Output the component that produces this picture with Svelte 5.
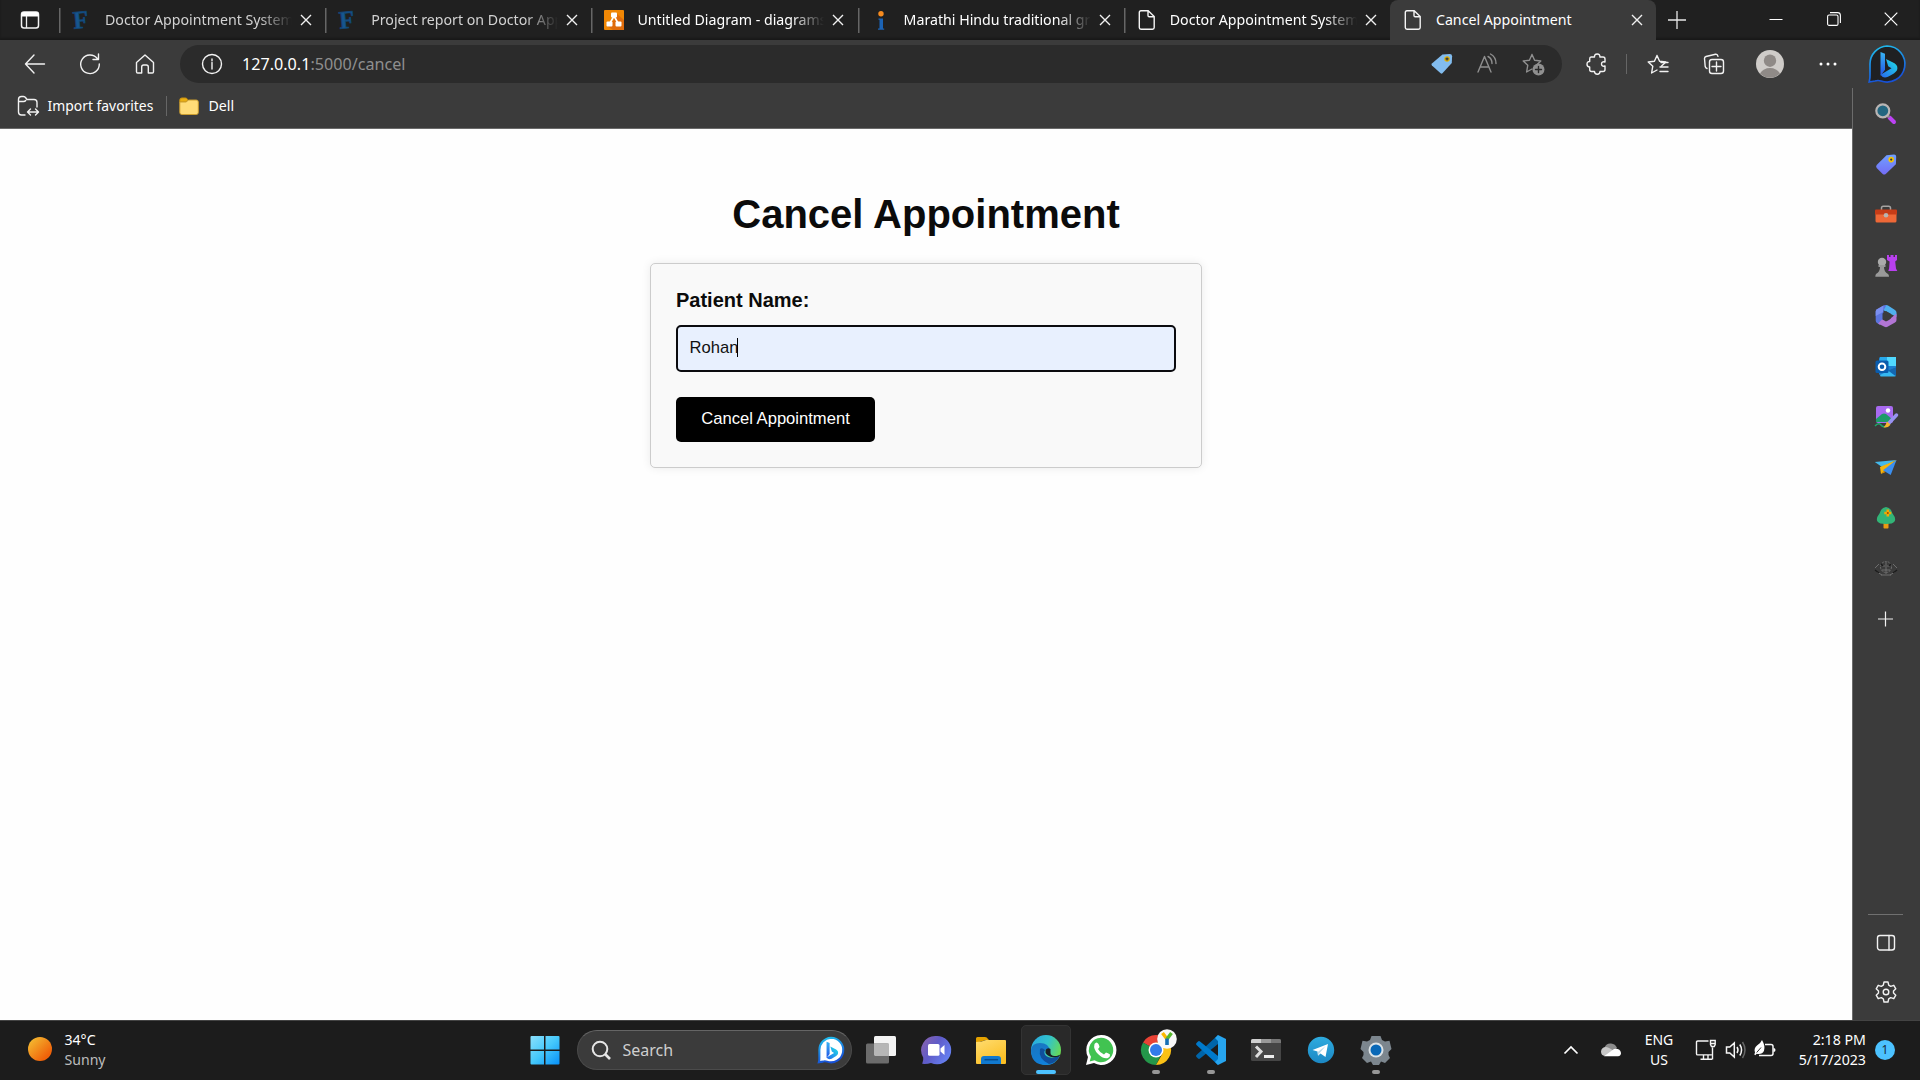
<script>
  const tabs = [
    { title: 'Doctor Appointment System', icon: 'f', dim: true },
    { title: 'Project report on Doctor Appointment', icon: 'f', dim: true },
    { title: 'Untitled Diagram - diagrams.net', icon: 'drawio' },
    { title: 'Marathi Hindu traditional greeting', icon: 'i' },
    { title: 'Doctor Appointment System', icon: 'page' },
    { title: 'Cancel Appointment', icon: 'page', active: true }
  ];
  const side = ['search', 'tag', 'toolbox', 'chess', 'm365', 'outlook', 'designer', 'plane', 'tree', 'emblem', 'plus'];
  const apps = ['taskview', 'chat', 'explorer', 'edge', 'whatsapp', 'chrome', 'vscode', 'terminal', 'telegram', 'settings'];
  const running = ['chrome', 'vscode', 'settings'];
</script>

{#snippet favicon(name)}
  {#if name === 'f'}
    <svg width="20" height="20" viewBox="0 0 20 20"><text x="1" y="18" class="f-letter" transform="rotate(-5 10 10)">F</text></svg>
  {:else if name === 'drawio'}
    <svg width="20" height="20" viewBox="0 0 20 20"><rect width="20" height="20" rx="1" fill="#f08705" /><path d="M12 3l8 7v10H9l-6-4 7-6z" fill="#df6c0c" /><path d="M10 6L5.500 14M10 6l4.500 8" stroke="#fff" stroke-width="1.600" /><rect x="7" y="2.500" width="6" height="5" rx="1" fill="#fff" /><rect x="2.500" y="11.500" width="6" height="5" rx="1" fill="#fff" /><rect x="11.500" y="11.500" width="6" height="5" rx="1" fill="#fff" /></svg>
  {:else if name === 'i'}
    <svg width="20" height="20" viewBox="0 0 20 20"><circle cx="10" cy="3.700" r="2.700" fill="#f68b1f" /><path d="M7.500 8.500H12v10h1.200v1.300H7v-1.300h1.500v-8.700h-1z" fill="#1b63b5" /></svg>
  {:else}
    <svg width="20" height="20" viewBox="0 0 20 20" fill="none" stroke="#f4f4f4" stroke-width="1.400"><path d="M4 .8h7.200L17.200 6.500V17.500q0 1.700-1.700 1.700H4q-1.700 0-1.700-1.700v-15Q2.300.8 4 .8zM11 1v4.500q0 1.200 1.200 1.200h5" /></svg>
  {/if}
{/snippet}

{#snippet bing(bg, size)}
  <svg width={size} height={size} viewBox="0 0 38 38"><path d="M19 1a18 18 0 1 1-6 35q-3-1-6 0l-5.800 1q1-4 .8-7V19A18 18 0 0 1 19 1z" fill={bg} stroke="url(#bing-ring)" stroke-width={size > 30 ? 1.7 : 3} /><path d="M12.500 7l4.500 1.800v16l-4.500 6z" fill="url(#bing-a)" /><path d="M18 14l8.500 4.300q4 2.500 2.500 7-1.800 3.200-9 6.500-5 2-7.500-2l11-6.500-3.300-2z" fill="url(#bing-b)" /></svg>
{/snippet}

{#snippet sideIcon(name)}
  <svg width="24" height="24" viewBox="0 0 24 24">
    {#if name === 'search'}
      <path d="M15.500 15.500L20 20" stroke="#bd42f4" stroke-width="4" stroke-linecap="round" /><path d="M13.500 13.500l2 2" stroke="#888" stroke-width="2" /><circle cx="8.800" cy="8.800" r="6.500" fill="#236680" stroke="#b9b5b4" stroke-width="2.200" />
    {:else if name === 'tag'}
      <path d="M12.500 2.200l7.500-.6q2.200 0 2.200 2.200l-.3 7.400-10.200 9.700q-1.500 1.200-3 0l-6-6q-1.200-1.500 0-3z" fill="url(#tag-g)" /><circle cx="17.200" cy="6.600" r="2.800" fill="#f4c400" /><circle cx="17.200" cy="6.600" r="1.100" fill="#27304f" />
    {:else if name === 'toolbox'}
      <path d="M7.500 7V5q0-1.800 1.800-1.800h5.400q1.800 0 1.800 1.800v2" fill="none" stroke="#a6a3a1" stroke-width="1.500" /><rect x="1.500" y="8" width="21" height="11.500" rx="1.500" fill="#ee6837" /><path d="M1 7.500q0-1 1-1h20q1 0 1 1v4H1z" fill="#c63c17" /><circle cx="12" cy="12.200" r="2.300" fill="#b8b4b1" />
    {:else if name === 'chess'}
      <path d="M13 1h2v2h1.500V1h3v2H21V1h2v5l-1.800 1.500.8 7 1.300 2.500h-9l.8-2.500.5-7L13 6z" fill="#b940ef" /><circle cx="8" cy="8" r="4.200" fill="#aaa" /><path d="M4.500 11h7v2h-1.500q0 5 4 7 1 .8 1 2.700H1.300Q1.300 21 2 20q4-2 4-7H4.500z" fill="#999" />
    {:else if name === 'm365'}
      <path d="M11 1.500q1.500-1 3 0L21 6q1.500 1 1.500 2.500V13L16 9.500 9 6z" fill="#4fb0ee" /><path d="M12.500 1L9.500 6.500v9L6 21l-3-2q-1.300-1-1.300-2.500v-9Q1.700 6 3 5.200L10 1.300z" fill="#5b74de" /><path d="M9.500 1.500L3 5.200Q1.700 6 1.700 7.500V12L9 8z" fill="#7b8ff0" /><path d="M8 15.500l6 1 8.500-7v6.500q0 1.500-1.500 2.500l-7.500 4.300q-1.500.8-3 0L4 19.500z" fill="#b275d4" /><path d="M12 7l4.700 2.700v5L12 17.500l-3.500-2v-6z" fill="#3b3b3b" />
    {:else if name === 'outlook'}
      <rect x="5" y="2" width="17" height="18" rx="1.500" fill="#1c7fd0" /><path d="M6 2h8v8H5z" fill="#28a8ea" /><path d="M13 2h9v9h-9z" fill="#50d9ff" /><path d="M6 20L22 12v8q0 1.500-1.500 1.500h-14z" fill="#35b8f1" /><path d="M22 12v8q0 .8-.5 1L14 15.500z" fill="#1466b0" /><rect x="1.500" y="5.500" width="13" height="12.500" rx="1.500" fill="#0a5cad" /><circle cx="8" cy="11.700" r="3.300" fill="none" stroke="#fff" stroke-width="2" />
    {:else if name === 'designer'}
      <rect x="2" y="1" width="17" height="17" rx="2" fill="#a86af0" /><path d="M2 14l6-5q2-1 4 0l6 5v3H2z" fill="#1e9c68" /><circle cx="14" cy="5.500" r="2.200" fill="#fff" /><path d="M1 21q4-4 6-1t6 1" stroke="#1fa66a" stroke-width="1.500" fill="none" /><path d="M22.500 10L15 18" stroke="#9793f0" stroke-width="3.500" stroke-linecap="round" /><path d="M13 16.500l3.500 3.200q-2.500 3.500-7 2.800 2.500-2.500 3.500-6z" fill="#f8b52c" />
    {:else if name === 'plane'}
      <path d="M.8 6L22.500 4 8 11z" fill="#43b9ec" /><path d="M22.500 4L6 11l1 7z" fill="#f6b50b" /><path d="M22.500 4l-5.800 15-7.700-4.700z" fill="#3b8ff0" /><path d="M7 18l3-3 1.500 1z" fill="#e89500" />
    {:else if name === 'tree'}
      <rect x="9.500" y="16" width="5" height="6.500" rx=".8" fill="#e89a12" /><path d="M12 1q5 .5 6.500 6.500 4 5 2 8-1.500 2.500-8.500 2.500t-8.500-2.500q-2-3 2-8Q7 1.500 12 1z" fill="#32b477" /><path d="M13.800 3.500v7M10.300 7h7" stroke="#f7a600" stroke-width="2.600" /><circle cx="13.800" cy="7" r="1" fill="#9a4f00" />
    {:else if name === 'emblem'}
      <g fill="none" stroke="#747474" stroke-width=".9"><circle cx="12" cy="10" r="5.500" stroke-dasharray="2 1" /><path d="M1 11l4-4M23 11l-4-4M3 15l5 3M21 15l-5 3M8 9h3M13 9h3M12 5v12M8 13h8M7 18h10" /><path d="M1 13l4 3M23 13l-4 3M7 7l2 2M17 7l-2 2" stroke="#1c1c1c" stroke-width="1.500" /></g>
    {:else}
      <path d="M11.500 4.500v15M4 12h15" stroke="#f2f2f2" stroke-width="1.200" />
    {/if}
  </svg>
{/snippet}

{#snippet appIcon(name)}
  <svg width="36" height="40" viewBox="0 0 36 40">
    {#if name === 'taskview'}
      <rect x="11" y="6" width="22" height="20" rx="1.500" fill="#f3f3f3" /><rect x="3" y="13.500" width="23" height="20" rx="1.500" fill="#6c6c6c" /><path d="M11 13.500h15v12.500H12l-1-1z" fill="#b6b6b6" />
    {:else if name === 'chat'}
      <path d="M18 6a14.200 14.200 0 1 1-5 27q-4 1.200-8.800.8 1.500-3.500 1-6.300A14.200 14.200 0 0 1 18 6z" fill="url(#chat-g)" /><rect x="10" y="14" width="11.500" height="11.800" rx="1.500" fill="#fff" /><path d="M22.500 18.500l4-3.500v10l-4-3.500z" fill="#fff" />
    {:else if name === 'explorer'}
      <path d="M3 8.500Q3 7 4.500 7H12q2 0 3 2l1 1h-3L3 13z" fill="#e5a200" /><path d="M3 12q6 0 10-2h19q1 0 1 1v22q0 1-1 1H4q-1 0-1-1z" fill="url(#folder-g)" /><path d="M8 34v-5q0-3 3-3h14q3 0 3 3v5z" fill="#1179cf" /><path d="M11.500 29.700H25" stroke="#084c8e" stroke-width="1.500" />
    {:else if name === 'edge'}
      <circle cx="18" cy="20" r="15" fill="url(#edge-a)" /><path d="M3 20q1-7 9-7 9 0 10 8-2-3-5-1-2 3 1 6 5 5 14-1Q28 35 18 35 3 35 3 20z" fill="url(#edge-b)" /><path d="M12 19q-2 10 9 15 8-1 11-9-8 5-14 1-3-3-1-6-3-3-5-1z" fill="#104f9c" /><path d="M17.500 20q2-3 5-1v4q0 2.500 4 3 4.500 0 6-2-1 3-4 3-8 1-11-4z" fill="#1c1f22" />
    {:else if name === 'whatsapp'}
      <path d="M18 5A15 15 0 1 1 11 33l-8 2 2-8A15 15 0 0 1 18 5z" fill="#fff" /><path d="M18 7.800a12.200 12.200 0 1 1-6.500 22.500L6.700 31.500 8 26.800A12.200 12.200 0 0 1 18 7.800z" fill="#41c351" /><path d="M11.500 14q2-3 4 0l1 2.500q0 1-1.500 2.500 2 4 6 5.500l2-2q2 .3 4 2 .5 2-2 3.500-5 1.200-10-4-5-5-3.500-10z" fill="#fff" />
    {:else if name === 'chrome'}
      <path d="M18 20L5 12.500A15 15 0 0 1 31 12.500H18z" fill="#e94235" /><path d="M5 12.500A15 15 0 0 0 18 35l6-12z" fill="#24974a" /><path d="M18 35A15 15 0 0 0 31 12.500H18l6.500 11z" fill="#fbc116" /><circle cx="18" cy="20" r="7.500" fill="#fff" /><circle cx="18" cy="20" r="6" fill="#327bea" /><circle cx="29" cy="9" r="9.800" fill="#f8f8f8" /><path d="M24.500 3l4.500 6" stroke="#fdb900" stroke-width="3.500" /><path d="M33.500 3l-4.500 6" stroke="#57b82d" stroke-width="3.500" /><path d="M29 8.500V15" stroke="#146eb4" stroke-width="3.600" />
    {:else if name === 'vscode'}
      <path d="M25 5v9L7 28.500q-1 .8-2 0L3.500 27q-1-1 0-2z" fill="#0065a9" /><path d="M3.500 15q-1-1 0-2L5 11.500q1-.8 2 0L25 26v9z" fill="#007acc" /><path d="M25 5l8 4v22l-8 4-3-3 3-3V11l-3-3z" fill="#27a5ef" />
    {:else if name === 'terminal'}
      <rect x="3" y="9" width="30" height="22" rx="1.500" fill="#454545" /><path d="M3 13v-2.500Q3 9 4.500 9H13v4z" fill="#d0d0d0" /><path d="M13 9h10v4H13z" fill="#999" /><path d="M23 9h8.500Q33 9 33 10.500V13H23z" fill="#777" /><path d="M8 16.500l5 5-5 5.500" fill="none" stroke="#ddd" stroke-width="3" /><path d="M16 26.500h10" stroke="#ececec" stroke-width="3" />
    {:else if name === 'telegram'}
      <circle cx="18" cy="20" r="13.200" fill="url(#tg)" /><path d="M9.500 20L25 14l-2.500 13-5-3.500-2.500 2.300-.5-4.300z" fill="#fff" /><path d="M14.700 22l8-6-6 7-1.700 2.500z" fill="#b9d9e9" />
    {:else}
      <path d="M13.500 6h9l1.500 4 3 1.500 4.500-.7 2 8.200-3 3v3l1.500 3-5 5-4-1.500-2 3.500h-6l-2-3.500L9 33l-5-5 1.500-3v-3l-3-3 2-8.200 4.500.7 3-1.500z" fill="#7c868e" /><circle cx="18" cy="20" r="7.500" fill="#dce3e7" /><circle cx="18" cy="20" r="5.500" fill="#0868b7" />
    {/if}
  </svg>
{/snippet}

{#snippet star()}
  <path d="M11 2.500l2.600 5.700 6.200.8-4.500 4.300M11 2.500L8.400 8.200l-6.200.8 4.600 4.200L5.600 20l5.400-3" />
{/snippet}

<svg class="defs" width="0" height="0">
  <defs>
    <linearGradient id="bing-ring" x1="0" y1="0" x2=".3" y2="1"><stop stop-color="#20c5ee" /><stop offset="1" stop-color="#1751d7" /></linearGradient>
    <linearGradient id="bing-a" x1="0" y1="0" x2="0" y2="1"><stop stop-color="#37b5f5" /><stop offset="1" stop-color="#2353e4" /></linearGradient>
    <linearGradient id="bing-b" x1="0" y1="1" x2="1" y2="0"><stop stop-color="#2866ef" /><stop offset="1" stop-color="#1ee2e5" /></linearGradient>
    <linearGradient id="tag-g" x1="0" y1="0" x2="0" y2="1"><stop stop-color="#6fa0ff" /><stop offset="1" stop-color="#746cf5" /></linearGradient>
    <linearGradient id="chat-g" x1="0" y1="0" x2="1" y2=".6"><stop stop-color="#8f63a9" /><stop offset=".5" stop-color="#5f5bc8" /><stop offset="1" stop-color="#657ff0" /></linearGradient>
    <linearGradient id="folder-g" x1="0" y1="0" x2=".6" y2="1"><stop stop-color="#ffdc70" /><stop offset="1" stop-color="#fbbf24" /></linearGradient>
    <linearGradient id="edge-a" x1="0" y1=".2" x2="1" y2=".6"><stop stop-color="#28a9df" /><stop offset=".5" stop-color="#32c3cc" /><stop offset="1" stop-color="#6bdb4d" /></linearGradient>
    <linearGradient id="edge-b" x1="0" y1="0" x2=".5" y2="1"><stop stop-color="#1a75bd" /><stop offset="1" stop-color="#1081dc" /></linearGradient>
    <linearGradient id="tg" x1="0" y1="0" x2="0" y2="1"><stop stop-color="#2eabdf" /><stop offset="1" stop-color="#1c88c4" /></linearGradient>
    <linearGradient id="win" x1="0" y1="0" x2="1" y2="1"><stop stop-color="#8be0fc" /><stop offset=".5" stop-color="#45c8fb" /><stop offset="1" stop-color="#0790f8" /></linearGradient>
  </defs>
</svg>

<div class="screen">
  <header class="tabstrip">
    <div class="tab-actions">
      <svg width="20" height="20" viewBox="0 0 20 20"><rect x="1.500" y="2" width="17" height="16" rx="2.500" fill="none" stroke="#f4f4f4" stroke-width="1.500" /><path d="M1.500 6.500V4.500Q1.500 2 4 2h12q2.500 0 2.500 2.500v2z" fill="#fff" /><path d="M6.500 6v12" stroke="#eee" stroke-width="1.300" /></svg>
    </div>
    {#each tabs as tab}
      <div class="tab" class:active={tab.active} class:dim={tab.dim}>
        {@render favicon(tab.icon)}
        <span class="title">{tab.title}</span>
        <svg width="12" height="12" viewBox="0 0 12 12"><path d="M1 1l10 10M11 1L1 11" stroke="#f1f1f1" stroke-width="1.400" /></svg>
      </div>
    {/each}
    <div class="new-tab"><svg width="18" height="18" viewBox="0 0 18 18"><path d="M9 0v18M0 9h18" stroke="#e8e8e8" stroke-width="1.300" /></svg></div>
    <div class="window-buttons">
      <svg width="14" height="14" viewBox="0 0 14 14"><path d="M.5 7.500h13" stroke="#fff" /></svg>
      <svg width="14" height="14" viewBox="0 0 14 14" fill="none" stroke="#fff" stroke-width="1.100"><rect x=".6" y="3" width="10.400" height="10.400" rx="1.500" /><path d="M3 .6h7.500q2.900 0 2.900 2.900V11" /></svg>
      <svg width="14" height="14" viewBox="0 0 14 14"><path d="M.7.7l12.600 12.600M13.300.7L.7 13.300" stroke="#fff" stroke-width="1.200" /></svg>
    </div>
  </header>

  <div class="toolbar">
    <div class="cell"><svg width="22" height="22" viewBox="0 0 22 22" class="line"><path d="M20.500 11H1.500M10 2L1.500 11l8.500 9" /></svg></div>
    <div class="cell"><svg width="22" height="22" viewBox="0 0 22 22" class="line"><path d="M18.300 5.500a9.300 9.300 0 1 0 2 5.500M19.500 1v5.500H14" /></svg></div>
    <div class="cell"><svg width="22" height="22" viewBox="0 0 22 22" class="line"><path d="M2.500 9.500L11 2l8.500 7.500v9.300q0 1.200-1.200 1.200h-4V14q0-2-2-2H9.700q-2 0-2 2v6h-4q-1.200 0-1.200-1.200z" /></svg></div>
    <div class="address">
      <svg width="22" height="22" viewBox="0 0 22 22" class="line"><circle cx="11" cy="11" r="9.500" /><path d="M11 9.500V16M11 6v1.800" /></svg>
      <span class="url"><b>127.0.0.1</b>:5000/cancel</span>
      <div class="address-icons">
        <svg width="22" height="22" viewBox="0 0 24 24"><path d="M12.500 1.500l8-.5q2.500 0 2.500 2.500l-.3 7.500L12.500 22.200q-1 .9-2 0L1 13.500q-1-1 0-2z" fill="#82bcee" /><circle cx="17.500" cy="6.500" r="3" fill="#e1ad00" /><path d="M17.500 4.800v3.400M15.800 6.500h3.400" stroke="#27364b" stroke-width="1.400" /></svg>
        <svg width="22" height="22" viewBox="0 0 22 22" class="line grey"><path d="M2 19L8.500 3.500 15 19M4.300 14h8.400M12 3.500q4 2 4 7M14.500 1q5.500 3 5.500 9.500" /></svg>
        <svg width="24" height="24" viewBox="0 0 24 24" class="line grey">{@render star()}<circle cx="17.500" cy="17.500" r="6" fill="#8f8f8f" stroke="none" /><path d="M17.500 14.500v6M14.500 17.500h6" stroke="#292929" /></svg>
      </div>
    </div>
    <div class="cell ext"><svg width="22" height="22" viewBox="0 0 22 22" class="line"><path d="M5 4h3.500q-.2-3 2.700-3t2.700 3H17q2 0 2 2v3q-3.500-.8-3.500 2t3.500 2v3.500q0 2-2 2h-3q0 2.700-2.700 2.700t-2.800-2.700H5.500q-1.800 0-1.800-2V14Q1 14 1 11.200t2.700-2.700V6Q3.700 4 5 4z" /></svg></div>
    <i class="divider"></i>
    <div class="cell fav"><svg width="24" height="22" viewBox="0 0 24 22" class="line">{@render star()}<path d="M15 9.500h7M14 14h8M14 18.500h8" /></svg></div>
    <div class="cell coll"><svg width="22" height="22" viewBox="0 0 22 22" class="line"><path d="M4 15.500Q2.500 15 2.200 13.500L1.500 5.500Q1.500 4 3 3.500l9.500-2.200q2-.3 2.500 2" /><rect x="6.500" y="6.500" width="14" height="14" rx="2.500" /><path d="M13.500 9v9M9 13.500h9" /></svg></div>
    <div class="cell avatar"><svg width="28" height="28" viewBox="0 0 28 28"><circle cx="14" cy="14" r="14" fill="#cfccc9" /><circle cx="14" cy="10.700" r="6.200" fill="#8f8a87" /><path d="M4 23.500q3.500-5.500 10-5.500t10 5.500a14 14 0 0 1-20 0z" fill="#8f8a87" /></svg></div>
    <div class="cell more"><svg width="18" height="6" viewBox="0 0 18 6"><g fill="#fff"><circle cx="2" cy="3" r="1.500" /><circle cx="9" cy="3" r="1.500" /><circle cx="16" cy="3" r="1.500" /></g></svg></div>
    <div class="cell bing">{@render bing('#1f2022', 38)}</div>
  </div>

  <div class="middle">
    <div class="left">
      <div class="bookmarks">
        <svg width="22" height="22" viewBox="0 0 22 22" class="line"><path d="M8 20H4.500q-3 0-3-3V4.500q0-3 3-3h2q1.500 0 2.200 1.300L10 4.500h7q3 0 3 3V12M1.500 6.500h5Q8 6.500 8.700 5.500M11 17h10M13.500 14L10.500 17l3 3M18.500 14l3 3-3 3" /></svg>
        <span class="import">Import favorites</span>
        <i class="divider"></i>
        <svg class="folder" width="20" height="20" viewBox="0 0 20 20"><path d="M.8 4Q.8 2 2.800 2h3.700Q8 2 8.500 3.500L8 6H.8z" fill="#e9ae13" stroke="#c89010" /><path d="M.8 6h6.500l2-2h8q2 0 2 2v10.500q0 2-2 2H2.800q-2 0-2-2z" fill="#ffdc78" stroke="#cb9d2f" /></svg>
        <span>Dell</span>
      </div>
      <main>
        <h1>Cancel Appointment</h1>
        <section class="card">
          <div class="label">Patient Name:</div>
          <div class="field">Rohan<i class="caret"></i></div>
          <button>Cancel Appointment</button>
        </section>
      </main>
    </div>
    <aside>
      {#each side as name}
        <div class="side-cell">{@render sideIcon(name)}</div>
      {/each}
      <div class="side-bottom">
        <svg width="20" height="20" viewBox="0 0 20 20" class="line"><rect x="1.500" y="2.500" width="17" height="14.500" rx="2.500" /><path d="M13 2.500V17" /></svg>
        <svg width="22" height="22" viewBox="0 0 22 22" class="line"><path d="M9 1h4l.7 3.200 2 1.100 3.100-1 2 3.500L18.500 10v2l2.300 2.200-2 3.500-3.100-1-2 1.100L13 21H9l-.7-3.200-2-1.100-3.100 1-2-3.500L3.500 12v-2L1.200 7.800l2-3.500 3.100 1 2-1.100z" /><circle cx="11" cy="11" r="2.800" /></svg>
      </div>
    </aside>
  </div>

  <footer>
    <div class="weather"><i class="sun"></i><div>34°C<br /><span>Sunny</span></div></div>
    <div class="dock">
      <svg class="start" width="30" height="30" viewBox="0 0 30 30"><path d="M1.500 1H14v13.500H.5V2q0-1 1-1zM15.500 1h13q1 0 1 1v12.500h-14zM.5 16H14v13.500H1.500q-1 0-1-1zM15.500 16h14v12.500q0 1-1 1h-13z" fill="url(#win)" /></svg>
      <div class="search">
        <svg width="20" height="20" viewBox="0 0 20 20" fill="none" stroke="#e6e6e6" stroke-width="2"><circle cx="9" cy="9" r="7.300" /><path d="M14 14l5 5" stroke-width="2.600" /></svg>
        <span>Search</span>
        {@render bing('#fff', 26)}
      </div>
      {#each apps as name}
        <div class="app" class:current={name === 'edge'} class:running={running.includes(name)}>{@render appIcon(name)}</div>
      {/each}
    </div>
    <div class="tray">
      <svg class="chevron" width="16" height="10" viewBox="0 0 16 10"><path d="M1.500 8.500L8 2l6.500 6.500" fill="none" stroke="#fff" stroke-width="1.700" /></svg>
      <svg class="cloud" width="22" height="16" viewBox="0 0 22 16"><path d="M4.500 5.500Q6.500 1 11 1.500q4.500.3 6 4.500l-6 5z" fill="#8c8c8c" /><path d="M5 14q-4-.5-4-4.500Q1.500 5 6 5q2 0 4 1.500l6 3.500-6 4z" fill="#c8c8c8" /><path d="M4 14.300L14 7q6-1 7 4 0 3-3 3.300z" fill="#fff" /></svg>
      <div class="lang">ENG<br />US</div>
      <svg class="network" width="22" height="22" viewBox="0 0 22 22" fill="none" stroke="#f5f5f5" stroke-width="1.400"><path d="M13.500 2H2.700Q1.500 2 1.500 3.200v11.500q0 1.200 1.200 1.200h14M8.500 16v4M13 16v4M5.500 20.300H17M17.500 8.500v12M15.500 1.500h4.700v4l-1 2h-2.700l-1-2zM15.500 4.500h4.700" /></svg>
      <svg class="sound" width="22" height="20" viewBox="0 0 22 20" fill="none" stroke="#f5f5f5" stroke-width="1.500"><path d="M1.500 7h3.300l4.500-4v14l-4.500-4H1.500zM12 7q2 3 0 6M14.800 4.500q3.500 5.500 0 11" /><path d="M17.500 2q5 8 0 16" stroke="#666" /></svg>
      <svg class="battery" width="22" height="20" viewBox="0 0 22 20"><path d="M11 4.500h6q2 0 2 2v7q0 2-2 2H5" fill="none" stroke="#f5f5f5" stroke-width="1.500" /><path d="M19.500 8q2 0 2 2t-2 2z" fill="#fff" /><path d="M8 0Q6.500 3.500 3 5.500q-3.500 3-2 7L.3 14.500l1 .8 1.400-1.600q5.500 1 7.300-3Q11.500 6 8 0z" fill="#fff" /><path d="M2.700 12.500L7 7.500" stroke="#1c1c1c" stroke-width=".9" /></svg>
      <div class="clock">2:18 PM<br />5/17/2023</div>
      <span class="badge">1</span>
    </div>
  </footer>
</div>

<style>
  :global(body) { margin: 0; overflow: hidden; background: #fefefe; }
  .screen { width: 1920px; height: 1080px; display: flex; flex-direction: column; overflow: hidden; background: #3b3b3b; color: #fff; font: 14.200px/20px 'Noto Sans', sans-serif; }
  .defs { position: absolute; }
  svg { display: block; flex: none; overflow: visible; }
  .line { fill: none; stroke: #f2f2f2; stroke-width: 1.400; stroke-linejoin: round; stroke-linecap: round; }
  .grey { stroke: #8f8f8f; }
  .f-letter { font: bold 25px 'Liberation Serif', serif; fill: #17568e; stroke: #124574; stroke-width: .8; }

  .tabstrip { height: 40px; flex: none; display: flex; background: #202020; box-shadow: inset 0 -2px 2px #191919; }
  .tab-actions { width: 59px; flex: none; box-sizing: border-box; padding: 10px 0 0 20px; }
  .tab { width: 266.200px; flex: none; height: 40px; box-sizing: border-box; padding-left: 13px; display: flex; align-items: center; background: linear-gradient(#666, #666) 0 8px / 1.500px 25px no-repeat; }
  .title { width: 188px; margin: 0 7px 0 13px; overflow: hidden; white-space: nowrap; mask-image: linear-gradient(90deg, #000 154px, transparent 187px); }
  .dim .title { color: #d2d2d2; }
  .active { background: #3b3b3b; border-radius: 8px 8px 0 0; }
  .active .title { mask-image: none; }
  .new-tab { width: 44px; padding: 11px 0 0 12px; box-sizing: border-box; }
  .window-buttons { margin-left: auto; padding: 12px 22px 0 0; display: flex; gap: 43.500px; }

  .toolbar { height: 48px; flex: none; display: flex; align-items: center; padding-left: 7px; box-sizing: border-box; }
  .cell { width: 55px; flex: none; display: flex; justify-content: center; }
  .address { width: 1382px; flex: none; height: 38px; margin-left: 8px; padding: 0 17px 0 21px; box-sizing: border-box; display: flex; align-items: center; border-radius: 19px; background: #2b2b2b; }
  .url { margin-left: 19px; font-size: 16.150px; color: #8f8f8f; }
  .url b { font-weight: 400; color: #fff; }
  .address-icons { margin-left: auto; display: flex; align-items: center; gap: 23px; }
  .ext { width: 56px; margin-left: 7px; }
  .divider { width: 1px; flex: none; height: 20px; background: #666; }
  .toolbar .divider { margin-left: 1px; }
  .fav { width: 62px; }
  .coll { width: 50px; }
  .avatar { width: 62px; }
  .more { width: 53px; }
  .bing { width: 66px; }

  .middle { height: 932px; flex: none; display: flex; }
  .left { width: 1852px; display: flex; flex-direction: column; }
  .bookmarks { height: 41px; box-sizing: border-box; padding: 0 0 4px 16.500px; display: flex; align-items: center; border-bottom: 1px solid #6a6a6a; }
  .import { width: 118px; margin-left: 9px; font-size: 13.900px; }
  .folder { margin: 0 10px 0 12px; }
  main { flex: 1; display: flex; flex-direction: column; align-items: center; background: #fefefe; color: #0b0b0b; font-family: 'Liberation Sans', Arial, sans-serif; }
  h1 { margin: 62px 0 26px; font-size: 40px; line-height: 46px; }
  .card { width: 552px; height: 205px; box-sizing: border-box; padding: 25px; border: 1px solid #ccc; border-radius: 5px; background: #f9f9f9; box-shadow: 0 0 10px rgba(0, 0, 0, .08); }
  .label { font-size: 20px; font-weight: 700; line-height: 23px; margin-bottom: 13px; }
  .field { height: 47px; box-sizing: border-box; padding: 0 11.500px 2px; display: flex; align-items: center; border: 2px solid #0b0b0f; border-radius: 5px; background: #e8f0fe; font-size: 16.600px; color: #111; }
  .caret { width: 1px; height: 19px; margin-left: -1px; background: #000; }
  button { width: 199px; height: 45px; margin: 25px 0 0; padding: 0 0 2px; border: 0; border-radius: 5px; background: #000; color: #fff; font: 16.600px/20px 'Liberation Sans', Arial, sans-serif; display: block; }

  aside { width: 68px; box-sizing: border-box; padding: 1px 2px 0 0; border-left: 1px solid #6c6c6c; display: flex; flex-direction: column; align-items: center; }
  .side-cell { height: 50.500px; display: flex; align-items: center; }
  .side-bottom { width: 35px; margin: auto 0 17px; border-top: 1px solid #707070; padding-top: 18px; display: flex; flex-direction: column; align-items: center; gap: 28px; }

  footer { height: 60px; flex: none; box-sizing: border-box; border-top: 1px solid #434343; background: #1c1c1c; display: flex; }
  .weather { width: 526px; flex: none; box-sizing: border-box; padding: 9px 0 0 28px; display: flex; gap: 12.500px; line-height: 20px; font-size: 14.100px; }
  .weather span { color: #bcbcbc; }
  .sun { width: 24px; height: 24px; margin-top: 7px; border-radius: 50%; background: linear-gradient(135deg, #f4c636, #f06109 80%); }
  .dock { display: flex; align-items: center; padding-bottom: 1px; }
  .start { margin: 0 17px 0 3.500px; }
  .search { width: 275px; height: 40px; box-sizing: border-box; margin-right: 1.500px; padding: 0 7px 0 13px; display: flex; align-items: center; border: 1px solid #4b4b4b; border-top-color: #656565; border-radius: 20px; background: #3b3b3b; }
  .search span { flex: 1; margin-left: 12px; font-size: 16px; color: #cfcfcf; }
  .app { width: 50px; height: 50px; box-sizing: border-box; margin: 0 2.500px; padding-top: 4px; display: grid; justify-content: center; align-content: start; border: 1px solid transparent; border-radius: 5px; }
  .current { background: #292929; border-color: #333; }
  .current::after, .running::after { content: ''; width: 20px; height: 4px; justify-self: center; border-radius: 2px; background: #4cc2ff; }
  .running::after { width: 8px; background: #969696; }
  .tray { margin-left: auto; padding: 0 25px 1px 0; display: flex; align-items: center; }
  .cloud { margin: 0 22px 0 21px; }
  .lang { width: 30px; text-align: center; font-size: 14px; }
  .network { margin-left: 21px; }
  .sound { margin-left: 8px; }
  .battery { margin: 0 6px 0 7px; }
  .clock { width: 84px; text-align: right; }
  .badge { width: 20px; height: 20px; margin-left: 9px; border-radius: 50%; background: #4cc2ff; color: #182b36; text-align: center; font-size: 12px; }
</style>
